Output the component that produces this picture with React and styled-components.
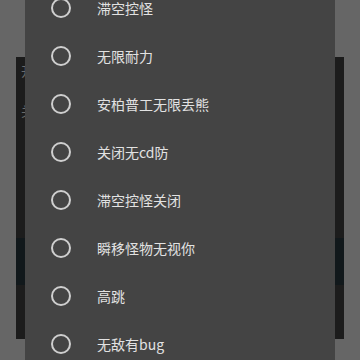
import React from "react"
import styled, { createGlobalStyle } from "styled-components"

const GlobalStyle = createGlobalStyle`
  html, body {
    margin: 0;
    padding: 0;
    background: #666666;
    font-family: "Noto Sans CJK SC", "Noto Sans", sans-serif;
  }
`

const Screen = styled.div`
  position: relative;
  width: 360px;
  height: 360px;
  overflow: hidden;
  background: #666666;
`

const BackPanel = styled.div`
  margin: 57px 0 0 16px;
  width: 328px;
  height: 282px;
  background: #1c1c1c;
  display: flex;
  flex-direction: column;
`

const BackLabel = styled.div`
  padding: 4px 0 0 5px;
  height: 36px;
  font-size: 13px;
  color: #6a6a6a;
`

const BackStrip = styled.div`
  margin-top: ${(p) => p.$top}px;
  height: 47px;
  background: #11181b;
`

const Dialog = styled.div`
  position: absolute;
  top: 0;
  left: 25px;
  width: 310px;
  height: 360px;
  background: #444444;
  overflow: hidden;
`

const List = styled.ul`
  list-style: none;
  margin: -16px 0 0 0;
  padding: 0;
`

const Row = styled.li`
  height: 48px;
  display: flex;
  align-items: center;
  padding-left: 26px;
  gap: 26px;
`

const Radio = styled.span`
  box-sizing: border-box;
  width: 20px;
  height: 20px;
  border-radius: 50%;
  border: 2px solid #cfcfcf;
  flex-shrink: 0;
`

const Label = styled.span`
  font-size: 14px;
  color: #e2e2e2;
  line-height: 1;
`

const items = [
  "滞空控怪",
  "无限耐力",
  "安柏普工无限丢熊",
  "关闭无cd防",
  "滞空控怪关闭",
  "瞬移怪物无视你",
  "高跳",
  "无敌有bug",
]

export default function App() {
  return (
    <Screen>
      <GlobalStyle />
      <BackPanel>
        <BackLabel>开</BackLabel>
        <BackLabel>关</BackLabel>
        <BackStrip $top={101} />
      </BackPanel>
      <Dialog>
        <List>
          {items.map((t) => (
            <Row key={t}>
              <Radio />
              <Label>{t}</Label>
            </Row>
          ))}
        </List>
      </Dialog>
    </Screen>
  )
}
